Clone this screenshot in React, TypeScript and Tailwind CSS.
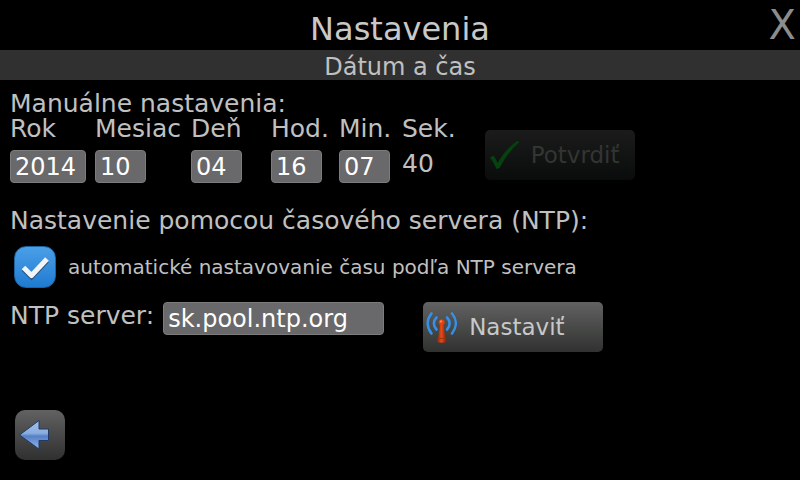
import { useState } from "react";

type Field = { id: string; label: string; value: string; width: string };

const FIELDS: Field[] = [
  { id: "year", label: "Rok", value: "2014", width: "w-[76px]" },
  { id: "month", label: "Mesiac", value: "10", width: "w-[51px]" },
  { id: "day", label: "Deň", value: "04", width: "w-[51px]" },
  { id: "hour", label: "Hod.", value: "16", width: "w-[51px]" },
  { id: "minute", label: "Min.", value: "07", width: "w-[51px]" },
];

const inputClass = "h-[33px] rounded-[4px] border border-[#7c7c7c] bg-[#69686a] px-1 text-2xl leading-none text-white outline-none";

const CheckIcon = () => (
  <svg viewBox="0 0 32 32" className="h-8 w-8" aria-hidden="true">
    <path d="M3 18.500 6.500 16.500Q9 19.500 10.500 24Q18 10 31 1.500L32 3.500Q21 13 12.500 29L9.500 30Q6.500 23 3 18.500Z" fill="#06420f" />
  </svg>
);

const AntennaIcon = () => (
  <svg viewBox="0 0 32 32" className="h-8 w-8" aria-hidden="true">
    <defs>
      <linearGradient id="mast" x1="0" x2="1" y1="0" y2="0">
        <stop offset="0" stopColor="#8e2204" />
        <stop offset="0.45" stopColor="#e84a18" />
        <stop offset="1" stopColor="#8a1d02" />
      </linearGradient>
    </defs>
    <g fill="none" stroke="#3590ea" strokeWidth="2.600" strokeLinecap="round">
      <path d="M6.500 2.500C1.500 8.500 1.500 16 6.500 22.500" />
      <path d="M11.500 6.500C8 10 8 15 11.500 18.500" />
      <path d="M22 6.500C25.500 10 25.500 15 22 18.500" />
      <path d="M27 2.500C32 8.500 32 16 27 22.500" />
    </g>
    <path d="M15 13h3.500l1.500 12.500 1.500 3v2.500q-4.700 1.500-9.400 0v-2.500l1.400-3Z" fill="url(#mast)" />
    <path d="M13.500 27.500h6.500" stroke="#a03410" strokeWidth="1" />
    <circle cx="16.700" cy="11.200" r="2.900" fill="#e0410f" />
    <circle cx="16" cy="10.400" r="1.200" fill="#ff8257" />
  </svg>
);

const BackIcon = () => (
  <svg viewBox="0 0 32 32" className="h-8 w-8" aria-hidden="true">
    <defs>
      <linearGradient id="arrow" x1="0" x2="0" y1="0" y2="1">
        <stop offset="0" stopColor="#a4c0e8" />
        <stop offset="0.450" stopColor="#8aade0" />
        <stop offset="0.550" stopColor="#567fc4" />
        <stop offset="1" stopColor="#94b6ea" />
      </linearGradient>
    </defs>
    <path d="M1.500 16 21 1.500v8.500h9.500V21.500H21v8.500Z" fill="url(#arrow)" stroke="#203a63" strokeWidth="1" strokeLinejoin="round" />
  </svg>
);

export default function App() {
  const [fields, setFields] = useState(FIELDS);
  const [auto, setAuto] = useState(true);
  const [server, setServer] = useState("sk.pool.ntp.org");

  const update = (id: string, value: string) => setFields(fields.map((f) => (f.id === id ? { ...f, value } : f)));

  return (
    <div className="flex min-h-screen flex-col bg-black font-['DejaVu_Sans',sans-serif] text-[25px] leading-[25px] text-[#c0c0c0]">
      <header className="grid h-[50px] grid-cols-[1fr_auto_1fr]">
        <h1 className="col-start-2 pt-2 text-[32px] leading-[42px] text-[#c8c8c8]">Nastavenia</h1>
        <button aria-label="Zavrieť" className="justify-self-end pr-1 text-[40px] leading-[50px] text-[#8c8c8c]">X</button>
      </header>
      <h2 className="h-[30px] bg-[#303030] pt-[3px] text-center text-2xl leading-[28px]">Dátum a čas</h2>

      <main className="flex flex-1 flex-col px-[10px] pt-[11px]">
        <section>
          <h3>Manuálne nastavenia:</h3>
          <div className="flex items-start gap-[29px]">
            <div className="grid grid-cols-[85px_96px_80px_68px_63px_auto]">
              {fields.map((f) => (
                <div key={f.id} className="flex flex-col items-start gap-[9px]">
                  <label htmlFor={f.id}>{f.label}</label>
                  <input id={f.id} value={f.value} onChange={(e) => update(f.id, e.target.value)} className={`${inputClass} ${f.width}`} />
                </div>
              ))}
              <div className="flex flex-col gap-[10px]">
                <span>Sek.</span>
                <output>40</output>
              </div>
            </div>
            <button disabled className="mt-[14px] flex h-[50px] w-[150px] items-center gap-3 rounded-[5px] bg-linear-to-b from-[#1b1b1b] to-[#0a0c0c] pl-[2px] text-[23px] text-[#333533]">
              <CheckIcon /> Potvrdiť
            </button>
          </div>
        </section>

        <section className="pt-[25px]">
          <h3>Nastavenie pomocou časového servera (NTP):</h3>
          <label className="mt-[13px] flex items-center gap-3 pl-1 text-xl">
            <span className="relative flex h-[42px] w-[42px] items-center justify-center">
              <input type="checkbox" checked={auto} onChange={(e) => setAuto(e.target.checked)} className="h-full w-full appearance-none rounded-[12px] border border-[#1c629f] bg-linear-to-b from-[#4a9fe8] to-[#1e7bd0]" />
              {auto && (
                <svg viewBox="0 0 42 42" className="pointer-events-none absolute inset-0" aria-hidden="true">
                  <path d="m9.500 23 8 8 15.500-16.500" fill="none" stroke="#235580" strokeWidth="5" />
                  <path d="m9.500 21.500 8 8 15.500-16.500" fill="none" stroke="#f4f4f8" strokeWidth="5" strokeLinejoin="round" />
                </svg>
              )}
            </span>
            automatické nastavovanie času podľa NTP servera
          </label>
          <div className="mt-[14px] flex items-start gap-[39px]">
            <div className="flex items-start gap-[9px]">
              <label htmlFor="server" className="pt-px">NTP server:</label>
              <input id="server" value={server} onChange={(e) => setServer(e.target.value)} className={`${inputClass} w-[221px]`} />
            </div>
            <button className="flex h-[50px] w-[180px] items-center gap-3 rounded-[5px] bg-linear-to-b from-[#626262] to-[#303230] pl-[2px] text-[23px] text-[#c8c8c8]">
              <AntennaIcon /> Nastaviť
            </button>
          </div>
        </section>
      </main>

      <footer className="px-[15px] pb-5">
        <button aria-label="Späť" className="flex h-[50px] w-[50px] items-center rounded-[10px] bg-linear-to-b from-[#626262] to-[#303030] pl-[3px]">
          <BackIcon />
        </button>
      </footer>
    </div>
  );
}
